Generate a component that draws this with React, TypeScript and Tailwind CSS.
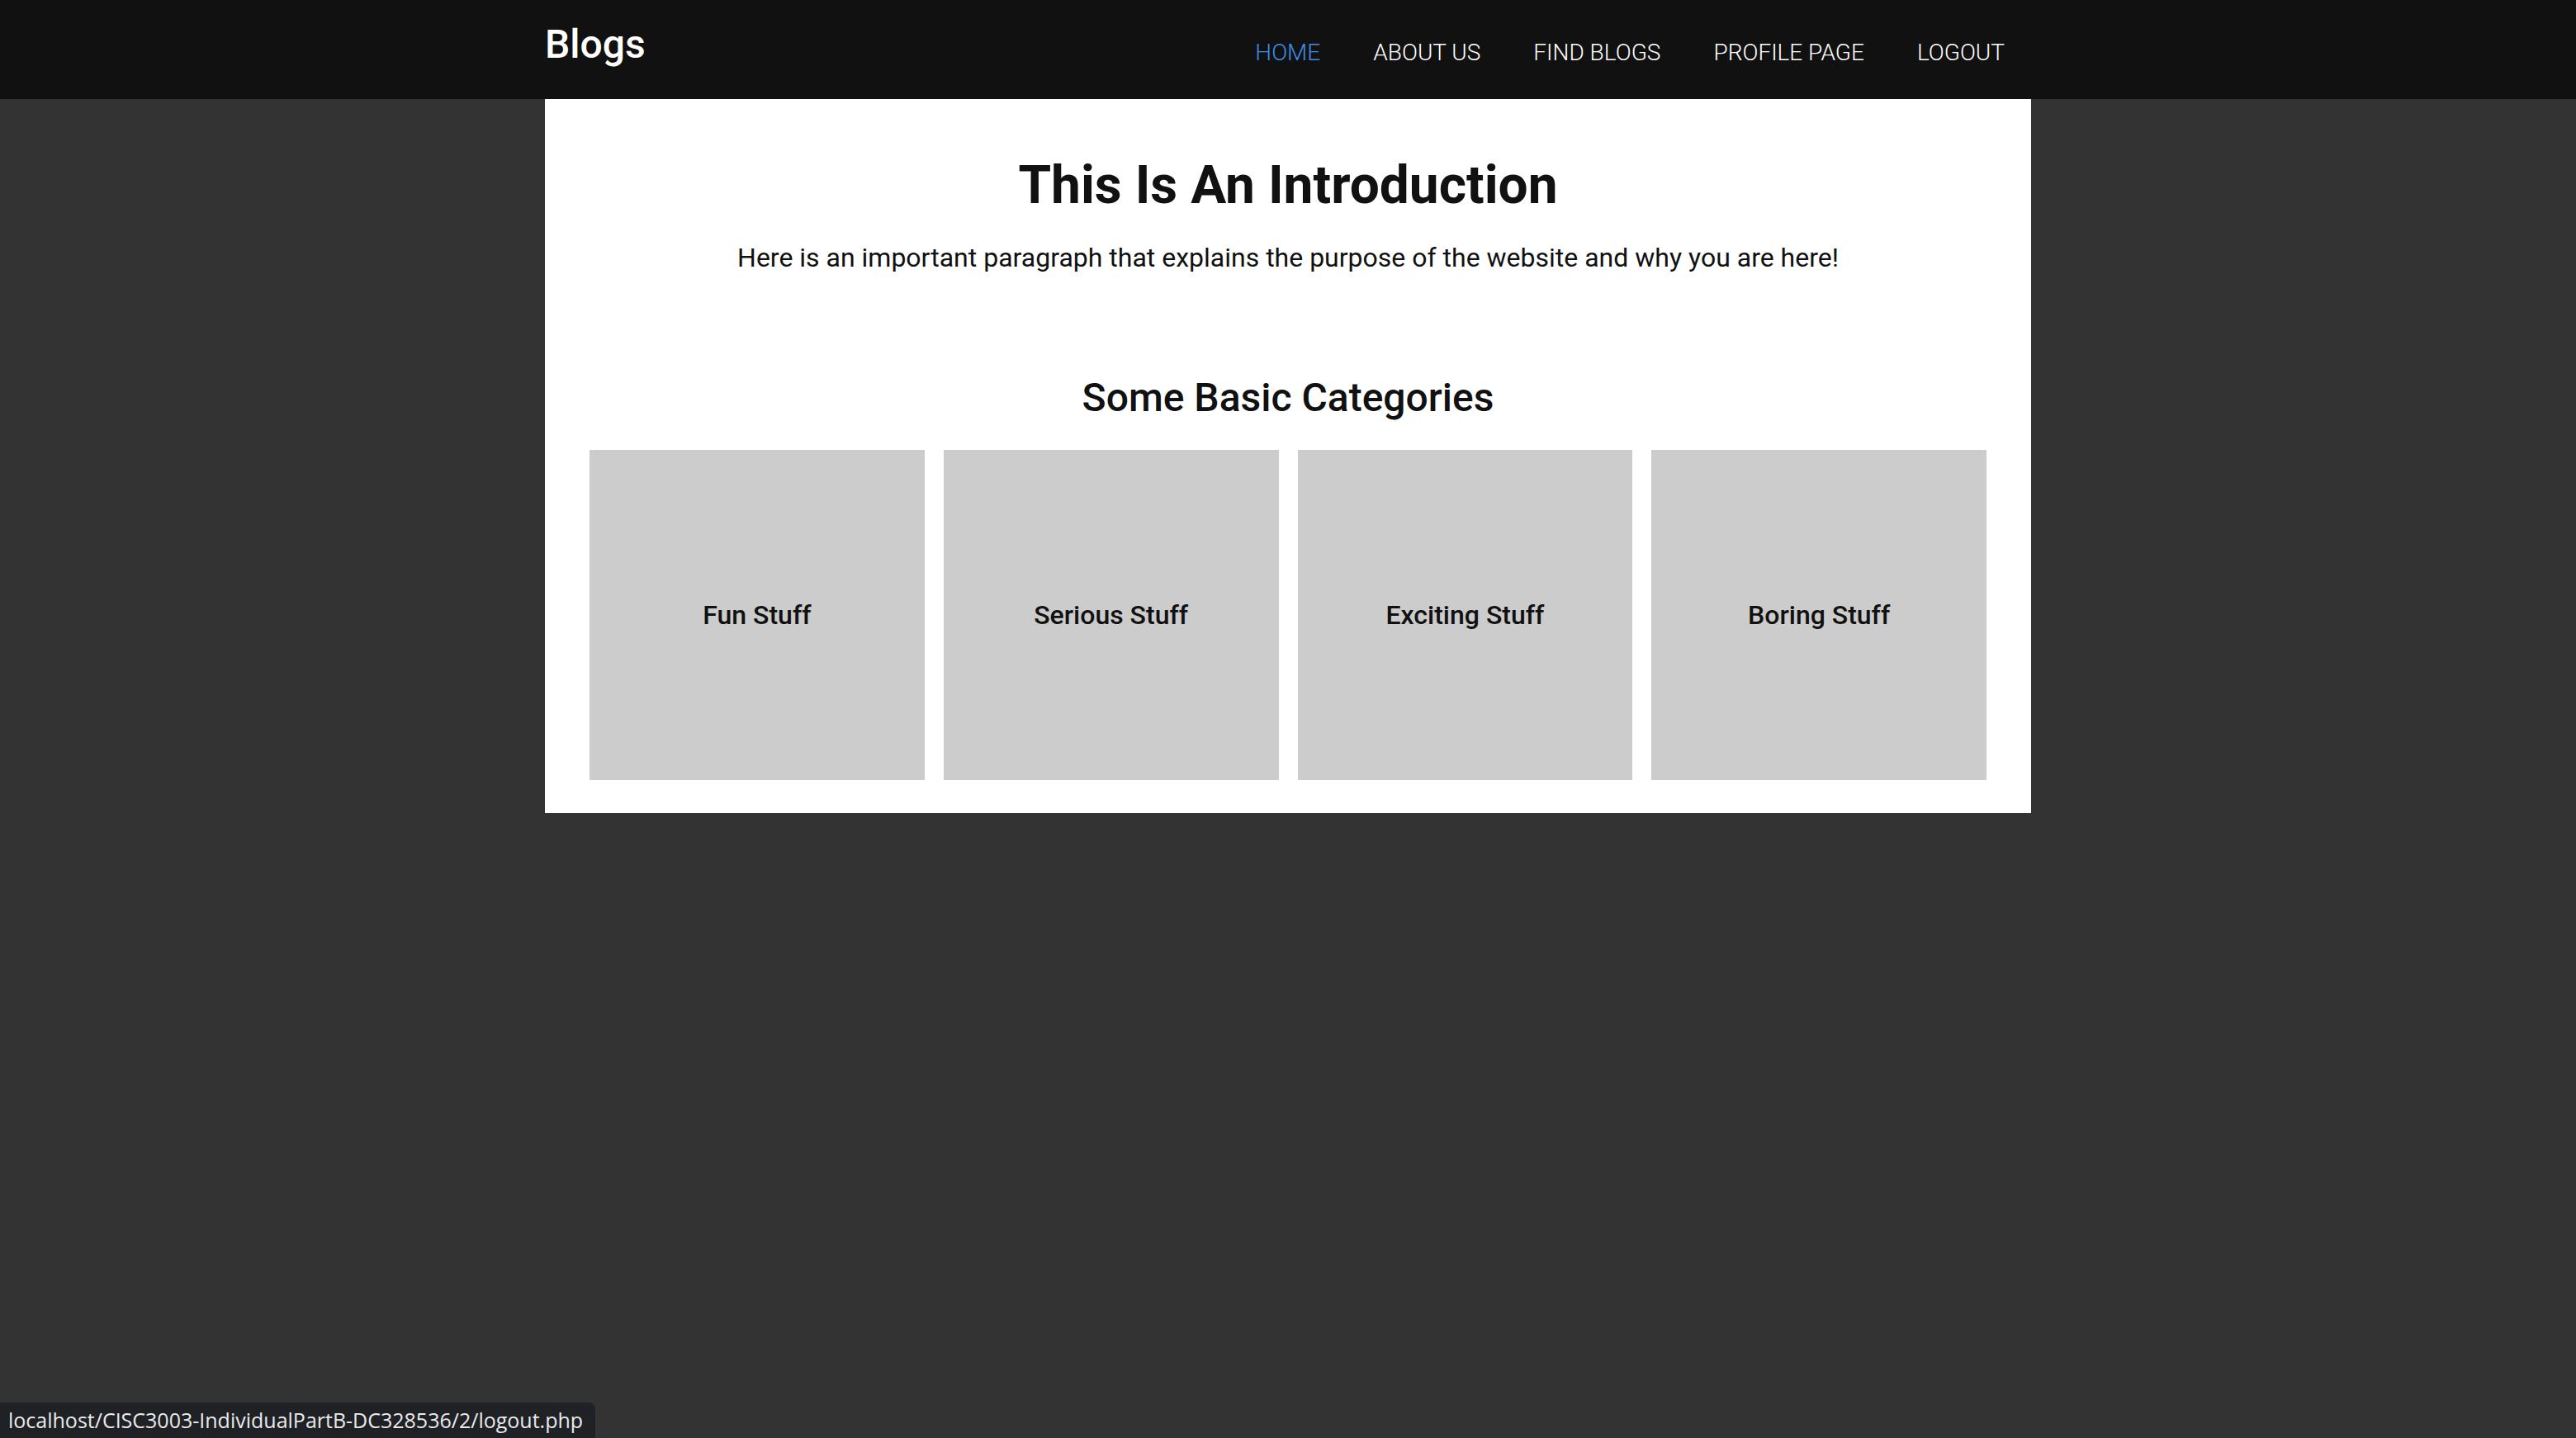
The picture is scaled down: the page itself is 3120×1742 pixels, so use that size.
import React from 'react'

const navLinks = ['HOME', 'ABOUT US', 'FIND BLOGS', 'PROFILE PAGE', 'LOGOUT']
const categories = ['Fun Stuff', 'Serious Stuff', 'Exciting Stuff', 'Boring Stuff']

const App = () => {
  return (
    <div className="min-h-screen bg-[#333333] font-['Roboto',sans-serif]">
      {/* Header */}
      <header className="h-[120px] bg-[#111111]">
        <div className="mx-auto flex w-[1800px] items-start justify-between">
          <a href="#" className="mt-[26px] text-[48px] font-medium leading-[56px] text-white">
            Blogs
          </a>
          <nav className="mt-[47px] flex">
            {navLinks.map((link, index) => (
              <a
                key={link}
                href="#"
                className={`px-[32px] text-[28px] font-light leading-[33px] ${index === 0 ? 'text-[#3f8ee6]' : 'text-white'}`}
              >
                {link}
              </a>
            ))}
          </nav>
        </div>
      </header>

      {/* Main content */}
      <main className="mx-auto w-[1800px] bg-white px-[54px] pb-[40px] pt-[67px] text-[#111111]">
        <h1 className="text-center text-[64px] font-bold leading-[75px]">This Is An Introduction</h1>
        <p className="mt-[31px] text-center text-[32px] leading-[38px]">
          Here is an important paragraph that explains the purpose of the website and why you are here!
        </p>

        <h2 className="mt-[123px] text-center text-[48px] font-medium leading-[56px]">Some Basic Categories</h2>
        <div className="mt-[35px] grid grid-cols-4 gap-[23px]">
          {categories.map((category) => (
            <div key={category} className="flex h-[400px] items-center justify-center bg-[#cccccc]">
              <span className="text-[32px] font-medium">{category}</span>
            </div>
          ))}
        </div>
      </main>

      {/* Browser status bubble */}
      <div className="fixed bottom-0 left-0 flex h-[43px] w-[721px] items-center rounded-tr-[8px] bg-[#202124] pl-[10px] font-['Open_Sans',sans-serif] text-[25px] text-[#e8eaed]">
        localhost/CISC3003-IndividualPartB-DC328536/2/logout.php
      </div>
    </div>
  )
}

export default App
